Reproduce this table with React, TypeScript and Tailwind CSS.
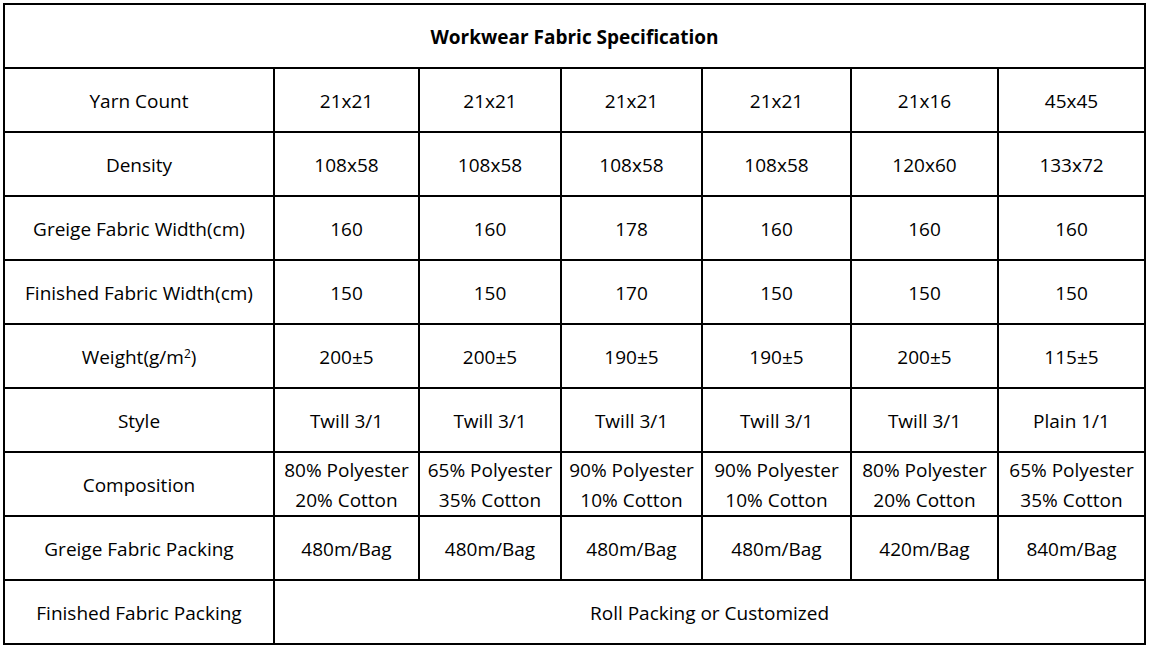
import React from 'react';

const rows: { label: React.ReactNode; values: string[][] }[] = [
  { label: 'Yarn Count', values: [['21x21'], ['21x21'], ['21x21'], ['21x21'], ['21x16'], ['45x45']] },
  { label: 'Density', values: [['108x58'], ['108x58'], ['108x58'], ['108x58'], ['120x60'], ['133x72']] },
  { label: 'Greige Fabric Width(cm)', values: [['160'], ['160'], ['178'], ['160'], ['160'], ['160']] },
  { label: 'Finished Fabric Width(cm)', values: [['150'], ['150'], ['170'], ['150'], ['150'], ['150']] },
  {
    label: (
      <>
        Weight(g/m<sup className="text-[12px]">2</sup>)
      </>
    ),
    values: [['200±5'], ['200±5'], ['190±5'], ['190±5'], ['200±5'], ['115±5']],
  },
  { label: 'Style', values: [['Twill 3/1'], ['Twill 3/1'], ['Twill 3/1'], ['Twill 3/1'], ['Twill 3/1'], ['Plain 1/1']] },
  {
    label: 'Composition',
    values: [
      ['80% Polyester', '20% Cotton'],
      ['65% Polyester', '35% Cotton'],
      ['90% Polyester', '10% Cotton'],
      ['90% Polyester', '10% Cotton'],
      ['80% Polyester', '20% Cotton'],
      ['65% Polyester', '35% Cotton'],
    ],
  },
  { label: 'Greige Fabric Packing', values: [['480m/Bag'], ['480m/Bag'], ['480m/Bag'], ['480m/Bag'], ['420m/Bag'], ['840m/Bag']] },
];

const cell = 'border-2 border-black text-center align-middle px-0 pt-[2px] pb-0';

export default function App() {
  return (
    <div className="min-h-screen bg-white pt-[3px] pl-[3px] text-black" style={{ fontFamily: '"Open Sans", "Noto Sans", sans-serif' }}>
      <table className="table-fixed border-collapse w-[1143px] text-[19px] leading-[26px]">
        <colgroup>
          <col className="w-[270px]" />
          <col className="w-[145px]" />
          <col className="w-[142px]" />
          <col className="w-[141px]" />
          <col className="w-[149px]" />
          <col className="w-[147px]" />
          <col className="w-[147px]" />
        </colgroup>
        <tbody>
          {/* Title */}
          <tr className="h-[64px]">
            <td colSpan={7} className={`${cell} font-bold`}>
              Workwear Fabric Specification
            </td>
          </tr>
          {rows.map((row, i) => (
            <tr key={i} className="h-[64px]">
              <td className={cell}>{row.label}</td>
              {row.values.map((v, j) => (
                <td key={j} className={cell}>
                  {v.length > 1 ? (
                    <div className="leading-[30px]">
                      <div>{v[0]}</div>
                      <div>{v[1]}</div>
                    </div>
                  ) : (
                    v[0]
                  )}
                </td>
              ))}
            </tr>
          ))}
          <tr className="h-[64px]">
            <td className={cell}>Finished Fabric Packing</td>
            <td colSpan={6} className={cell}>
              Roll Packing or Customized
            </td>
          </tr>
        </tbody>
      </table>
    </div>
  );
}
